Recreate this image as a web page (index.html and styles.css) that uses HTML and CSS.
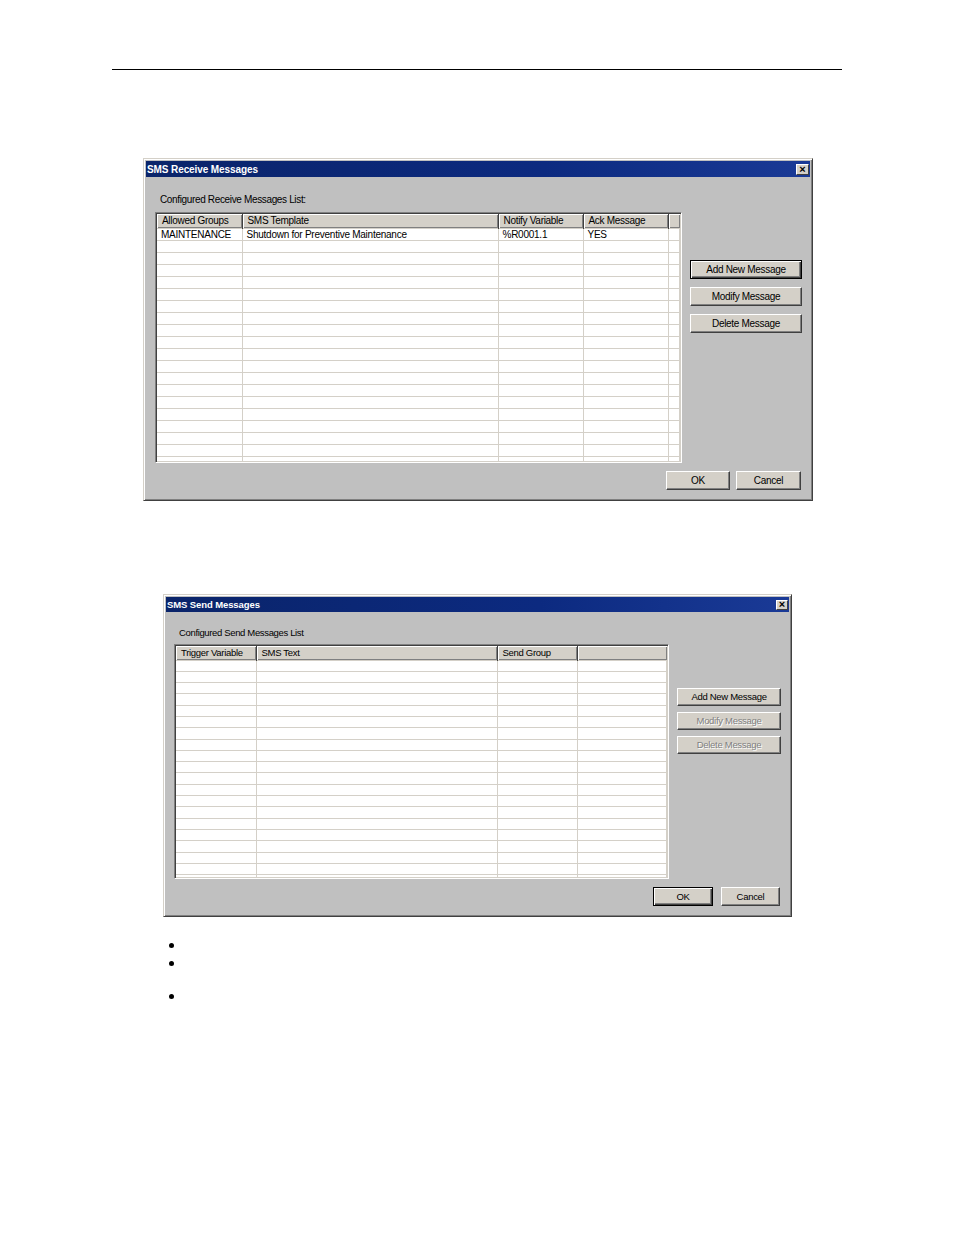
FILE: index.html
```html
<!DOCTYPE html>
<html>
<head>
<meta charset="utf-8">
<link rel="stylesheet" href="styles.css">
</head>
<body>
<div class="page">
  <div class="rule"></div>

  <div class="dlg dlg1">
    <div class="titlebar">
      <span class="title">SMS Receive Messages</span>
      <span class="close">×</span>
    </div>
    <div class="body">
      <div class="main">
        <div class="label">Configured Receive Messages List:</div>
        <div class="list">
          <table class="grid">
            <colgroup><col style="width:85px"><col style="width:256px"><col style="width:85px"><col style="width:85px"><col></colgroup>
            <thead>
              <tr><th>Allowed Groups</th><th>SMS Template</th><th>Notify Variable</th><th>Ack Message</th><th></th></tr>
            </thead>
            <tbody>
              <tr><td>MAINTENANCE</td><td>Shutdown for Preventive Maintenance</td><td>%R0001.1</td><td>YES</td><td></td></tr>
              <tr><td></td><td></td><td></td><td></td><td></td></tr>
              <tr><td></td><td></td><td></td><td></td><td></td></tr>
              <tr><td></td><td></td><td></td><td></td><td></td></tr>
              <tr><td></td><td></td><td></td><td></td><td></td></tr>
              <tr><td></td><td></td><td></td><td></td><td></td></tr>
              <tr><td></td><td></td><td></td><td></td><td></td></tr>
              <tr><td></td><td></td><td></td><td></td><td></td></tr>
              <tr><td></td><td></td><td></td><td></td><td></td></tr>
              <tr><td></td><td></td><td></td><td></td><td></td></tr>
              <tr><td></td><td></td><td></td><td></td><td></td></tr>
              <tr><td></td><td></td><td></td><td></td><td></td></tr>
              <tr><td></td><td></td><td></td><td></td><td></td></tr>
              <tr><td></td><td></td><td></td><td></td><td></td></tr>
              <tr><td></td><td></td><td></td><td></td><td></td></tr>
              <tr><td></td><td></td><td></td><td></td><td></td></tr>
              <tr><td></td><td></td><td></td><td></td><td></td></tr>
              <tr><td></td><td></td><td></td><td></td><td></td></tr>
              <tr><td></td><td></td><td></td><td></td><td></td></tr>
              <tr><td></td><td></td><td></td><td></td><td></td></tr>
            </tbody>
          </table>
        </div>
      </div>
      <div class="side">
        <div class="btn default">Add New Message</div>
        <div class="btn">Modify Message</div>
        <div class="btn">Delete Message</div>
      </div>
    </div>
    <div class="footer">
      <div class="btn ok">OK</div>
      <div class="btn cancel">Cancel</div>
    </div>
  </div>

  <div class="dlg dlg2">
    <div class="titlebar">
      <span class="title">SMS Send Messages</span>
      <span class="close">×</span>
    </div>
    <div class="body">
      <div class="main">
        <div class="label">Configured Send Messages List</div>
        <div class="list">
          <table class="grid">
            <colgroup><col style="width:80px"><col style="width:241px"><col style="width:80px"><col></colgroup>
            <thead>
              <tr><th>Trigger Variable</th><th>SMS Text</th><th>Send Group</th><th></th></tr>
            </thead>
            <tbody>
              <tr><td></td><td></td><td></td><td></td></tr>
              <tr><td></td><td></td><td></td><td></td></tr>
              <tr><td></td><td></td><td></td><td></td></tr>
              <tr><td></td><td></td><td></td><td></td></tr>
              <tr><td></td><td></td><td></td><td></td></tr>
              <tr><td></td><td></td><td></td><td></td></tr>
              <tr><td></td><td></td><td></td><td></td></tr>
              <tr><td></td><td></td><td></td><td></td></tr>
              <tr><td></td><td></td><td></td><td></td></tr>
              <tr><td></td><td></td><td></td><td></td></tr>
              <tr><td></td><td></td><td></td><td></td></tr>
              <tr><td></td><td></td><td></td><td></td></tr>
              <tr><td></td><td></td><td></td><td></td></tr>
              <tr><td></td><td></td><td></td><td></td></tr>
              <tr><td></td><td></td><td></td><td></td></tr>
              <tr><td></td><td></td><td></td><td></td></tr>
              <tr><td></td><td></td><td></td><td></td></tr>
              <tr><td></td><td></td><td></td><td></td></tr>
              <tr><td></td><td></td><td></td><td></td></tr>
              <tr><td></td><td></td><td></td><td></td></tr>
            </tbody>
          </table>
        </div>
      </div>
      <div class="side">
        <div class="btn">Add New Message</div>
        <div class="btn disabled">Modify Message</div>
        <div class="btn disabled">Delete Message</div>
      </div>
    </div>
    <div class="footer">
      <div class="btn ok default">OK</div>
      <div class="btn cancel">Cancel</div>
    </div>
  </div>

  <ul class="bullets">
    <li>&nbsp;</li>
    <li>&nbsp;</li>
    <li class="gap">&nbsp;</li>
  </ul>
</div>
</body>
</html>
```

FILE: styles.css
```css
html, body {
  margin: 0;
  padding: 0;
  background: #ffffff;
}
.page {
  width: 954px;
  height: 1235px;
  overflow: hidden;
  font-family: "Liberation Sans", Arial, sans-serif;
}
.rule {
  margin: 69px 0 0 112px;
  width: 730px;
  height: 1px;
  background: #000;
}

/* dialog frame */
.dlg {
  box-sizing: border-box;
  background: #c0c0c0;
  border: 1px solid;
  border-color: #d4d0c8 #404040 #404040 #d4d0c8;
  box-shadow: inset 1px 1px 0 #ffffff, inset -1px -1px 0 #808080;
  padding: 2px;
  display: flex;
  flex-direction: column;
  font-size: 10px;
  color: #000;
}
.dlg1 {
  margin: 88px 0 0 143px;
  width: 670px;
  height: 343px;
}
.dlg2 {
  margin: 93px 0 0 163px;
  width: 629px;
  height: 323px;
}

.titlebar {
  height: 16px;
  background: linear-gradient(to right, #0a246a 0%, #0c2a80 60%, #1a3a96 100%);
  display: flex;
  align-items: center;
  justify-content: space-between;
  padding: 0 1px 0 1px;
}
.dlg2 .titlebar { height: 15px; }
.title {
  color: #fff;
  font-weight: bold;
  font-size: 10px;
  letter-spacing: -0.1px;
}
.dlg2 .title { font-size: 9.5px; }
.close {
  box-sizing: border-box;
  width: 13px;
  height: 11px;
  background: #d4d0c8;
  border: 1px solid;
  border-color: #fff #404040 #404040 #fff;
  font-size: 11px;
  font-weight: bold;
  line-height: 8px;
  text-align: center;
  color: #000;
}
.dlg2 .close { width: 12px; height: 10px; line-height: 7px; }

.body {
  display: flex;
}
.dlg1 .body { padding: 0 0 0 9px; }
.dlg2 .body { padding: 0 0 0 8px; }
.main { display: flex; flex-direction: column; }
.label {
  letter-spacing: -0.35px;
}
.dlg1 .label { padding: 17px 0 0 5px; height: 18px; }
.dlg2 .label { padding: 15px 0 0 5px; height: 17px; font-size: 9.5px; }

/* list view */
.list {
  box-sizing: border-box;
  background: #fff;
  border: 1px solid;
  border-color: #808080 #ffffff #ffffff #808080;
  box-shadow: inset 1px 1px 0 #404040, inset -1px -1px 0 #d4d0c8;
  padding: 1px;
  overflow: hidden;
}
.dlg1 .list { width: 527px; height: 251px; }
.dlg2 .list { width: 495px; height: 235px; }

.grid {
  border-collapse: collapse;
  table-layout: fixed;
  width: 100%;
}
.grid th {
  box-sizing: border-box;
  background: #d4d0c8;
  font-weight: normal;
  text-align: left;
  padding: 0 0 0 5px;
  border-right: 1px solid #404040;
  box-shadow: inset 1px 1px 0 #fff, inset -1px -1px 0 #808080;
  white-space: nowrap;
  overflow: hidden;
  letter-spacing: -0.3px;
}
.dlg1 .grid th { height: 14px; line-height: 13px; }
.dlg2 .grid th { height: 14px; font-size: 9.5px; }
.grid th:last-child { border-right: none; }
.grid td {
  box-sizing: border-box;
  border-right: 1px solid #d4d0c8;
  border-bottom: 1px solid #d4d0c8;
  padding: 0 0 0 4px;
  white-space: nowrap;
  overflow: hidden;
  letter-spacing: -0.25px;
}
.dlg1 .grid td { height: 12px; line-height: 11px; }
.dlg2 .grid td { height: 11.3px; line-height: 10px; }
.grid tbody tr:first-child td { border-top: 1px solid #d4d0c8; }

/* buttons */
.btn {
  box-sizing: border-box;
  background: #d4d0c8;
  border: 1px solid;
  border-color: #fff #404040 #404040 #fff;
  box-shadow: inset -1px -1px 0 #808080;
  text-align: center;
  letter-spacing: -0.3px;
  color: #000;
}
.btn.default {
  border-color: #000;
  box-shadow: inset 1px 1px 0 #fff, inset -1px -1px 0 #404040, inset -2px -2px 0 #808080;
}
.btn.disabled {
  color: #808080;
  text-shadow: 1px 1px 0 #fff;
}
.side {
  display: flex;
  flex-direction: column;
}
.dlg1 .side { padding: 83px 0 0 8px; gap: 8px; }
.dlg1 .side .btn { width: 112px; height: 19px; line-height: 17px; }
.dlg2 .side { padding: 76px 0 0 8px; gap: 6px; }
.dlg2 .side .btn { width: 104px; height: 18px; line-height: 16px; font-size: 9.5px; }

.footer {
  display: flex;
  justify-content: flex-end;
}
.dlg1 .footer { padding: 8px 9px 0 0; gap: 6px; }
.dlg1 .footer .btn { height: 19px; line-height: 17px; }
.dlg1 .ok { width: 64px; }
.dlg1 .cancel { width: 65px; }
.dlg2 .footer { padding: 8px 9px 0 0; gap: 8px; }
.dlg2 .footer .btn { height: 19px; line-height: 17px; font-size: 9.5px; }
.dlg2 .ok { width: 60px; }
.dlg2 .cancel { width: 59px; }

/* bullets */
.bullets {
  margin: 20px 0 0 0;
  padding: 0 0 0 186px;
  font-size: 17px;
  line-height: 18px;
}
.bullets li { height: 18px; }
.bullets li.gap { margin-top: 15px; }
```
